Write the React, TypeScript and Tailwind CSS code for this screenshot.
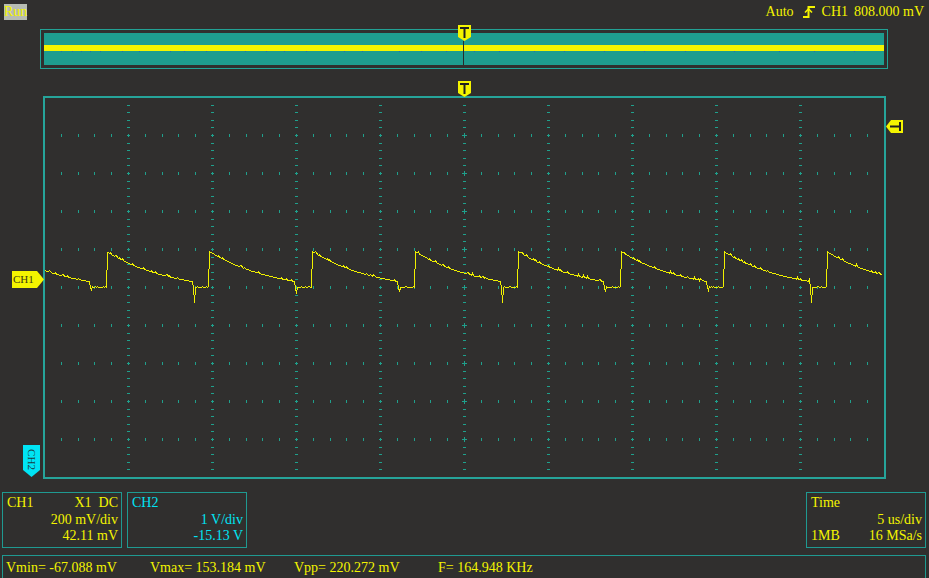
import React from 'react';

const YEL = '#f4f400';
const TEAL = '#22a295';

// deterministic jitter so the trace looks sampled
function rnd(i: number) {
  const s = Math.sin(i * 12.9898 + 78.233) * 43758.5453;
  return s - Math.floor(s);
}

function wavePoints() {
  const P = 102.9;
  const spikes: Record<number, number> = { 0: 289, 1: 302, 2: 293, 3: 291, 4: 302, 5: 291, 6: 290, 7: 302 };
  const pts: string[] = [];
  for (let x = 45; x <= 881; x++) {
    const t = x - 3.2;
    const n = Math.floor(t / P);
    const p = t - n * P;
    let y: number;
    if (p < 86) {
      y = 251 + 41 * (1 - Math.exp(-p / 65));
      if (p > 3 && rnd(x) > 0.86) y -= 1.5;
    } else if (p < 87) {
      y = 287;
    } else if (p < 88) {
      y = spikes[n] ?? 289;
    } else {
      y = 287 - (rnd(x) > 0.8 ? 1 : 0);
    }
    pts.push(`${x + 0.5},${Math.round(y) + 0.5}`);
  }
  return pts.join(' ');
}

const cols = [128, 212, 296, 380, 464, 548, 632, 716, 800];
const rows = [135, 173, 211, 249, 287, 325, 363, 401, 439];

function GridMarks() {
  const els: React.ReactNode[] = [];
  rows.forEach((r) => {
    for (let k = 1; k < 50; k++) {
      if (k % 5 === 0) continue;
      const x = Math.round(44 + 16.8 * k);
      els.push(<rect key={`r${r}-${k}`} x={x} y={r - 1} width={1} height={3} />);
    }
  });
  cols.forEach((c) => {
    for (let j = 1; j < 50; j++) {
      if (j % 5 === 0) continue;
      const y = Math.round(97 + 7.6 * j);
      els.push(<rect key={`c${c}-${j}`} x={c - 1} y={y} width={3} height={1} />);
    }
  });
  rows.forEach((r) =>
    cols.forEach((c) => {
      const s = c === 464 ? 2 : 1;
      els.push(
        <g key={`p${r}-${c}`}>
          <rect x={c - s} y={r} width={s * 2 + 1} height={1} />
          <rect x={c} y={r - s} width={1} height={s * 2 + 1} />
        </g>
      );
    })
  );
  return <g fill="#1fa08c">{els}</g>;
}

function TMarker({ className }: { className: string }) {
  return (
    <svg className={className} width="13" height="16" viewBox="0 0 13 16">
      <polygon points="0,0 13,0 13,12 6.5,16 0,12" fill={YEL} />
      <rect x="2" y="2" width="9" height="2" fill="#202020" />
      <rect x="5.5" y="2" width="2" height="11" fill="#202020" />
    </svg>
  );
}

function Box({ children }: { children: React.ReactNode }) {
  return (
    <div className="w-[120px] h-[56px] border border-[#1f9a91] pl-[4px] pr-[3px] pt-[2px] leading-[16.5px]">
      {children}
    </div>
  );
}

export default function App() {
  const blueTicks = [17, 28, 37, 46, 56, 78, 95, 126, 140, 162, 201, 222, 240, 262, 300, 318, 355, 377, 402, 430, 455, 490, 520, 560, 600, 641, 690, 735, 770, 810];
  return (
    <div className="relative w-[929px] h-[578px] overflow-hidden bg-[#302f2e] text-[14px] leading-[16px] text-[#f4f400] font-['Liberation_Serif','Times_New_Roman',serif]">
      {/* status line */}
      <div className="flex justify-between items-start pt-[4px] pl-[4px] pr-[5px] h-[29px]">
        <div className="bg-[#b7bcb2] h-[16px] w-[23px] leading-[16px]">Run</div>
        <div className="flex items-center">
          <span>Auto</span>
          <svg className="ml-[9px] mr-[7px]" width="12" height="12" viewBox="0 0 12 12">
            <path d="M0 11 H5.5 V1 H12" stroke={YEL} strokeWidth="2" fill="none" />
            <path d="M2 6.5 L5.5 3 L9 6.5" stroke={YEL} strokeWidth="1.6" fill="none" />
          </svg>
          <span>CH1</span>
          <span className="ml-[6px]">808.000 mV</span>
        </div>
      </div>

      {/* memory overview */}
      <div className="relative ml-[40px] w-[848px] h-[40px] border border-[#22a295] p-[3px]">
        <div className="relative h-full bg-[#1e9d8f]">
          <div className="absolute left-0 right-0 top-[12px] h-[6px] bg-[#f4f400]" />
          {blueTicks.map((x) => (
            <div key={x} className="absolute top-[18px] w-[1px] h-[1px] bg-[#2d63b8]" style={{ left: x }} />
          ))}
          <div className="absolute left-[419px] top-[8px] bottom-0 w-[1px] bg-[#2a2a2a]" />
        </div>
        <TMarker className="absolute left-[417px] top-[-5px]" />
      </div>

      {/* main graticule */}
      <div className="relative ml-[43px] mt-[27px] w-[843px] h-[383px] border-2 border-[#26a49a]">
        <svg className="absolute inset-0" width="839" height="379" viewBox="45 98 839 379" shapeRendering="crispEdges">
          <GridMarks />
          <polyline points={wavePoints()} fill="none" stroke="#f0f000" strokeWidth="1" />
        </svg>
        <TMarker className="absolute left-[413px] top-[-17px]" />
        {/* trigger level */}
        <svg className="absolute left-[841px] top-[22px]" width="17" height="13" viewBox="0 0 17 13">
          <polygon points="0,6.5 5,0 17,0 17,13 5,13" fill={YEL} />
          <rect x="4" y="5.5" width="10" height="2" fill="#202020" />
          <rect x="13" y="2" width="2" height="9" fill="#202020" />
        </svg>
        {/* CH1 offset */}
        <div className="absolute left-[-33px] top-[173px] w-[32px] h-[17px]">
          <svg className="absolute inset-0" width="32" height="17" viewBox="0 0 32 17">
            <polygon points="0,0 25,0 32,8.5 25,17 0,17" fill={YEL} />
          </svg>
          <span className="absolute left-[1px] top-[1px] text-[11px] leading-[15px] text-[#3a3a14]">CH1</span>
        </div>
        {/* CH2 offset */}
        <div className="absolute left-[-22px] top-[347px] w-[17px] h-[32px]">
          <svg className="absolute inset-0" width="17" height="32" viewBox="0 0 17 32">
            <polygon points="0,0 17,0 17,25 8.5,32 0,25" fill="#00e4f4" />
          </svg>
          <span className="absolute left-[-4px] top-[7px] w-[25px] h-[15px] text-[11px] leading-[15px] text-[#1c3a40] text-center rotate-90">
            CH2
          </span>
        </div>
      </div>

      {/* channel / time info */}
      <div className="flex justify-between mt-[13px] pl-[2px] pr-[3px] h-[56px]">
        <div className="flex gap-[5px]">
          <Box>
            <div className="flex justify-between">
              <span>CH1</span>
              <span className="whitespace-pre">X1  DC</span>
            </div>
            <div className="text-right">200 mV/div</div>
            <div className="text-right">42.11 mV</div>
          </Box>
          <Box>
            <div className="text-[#00e4f4]">
              <div>CH2</div>
              <div className="text-right">1 V/div</div>
              <div className="text-right">-15.13 V</div>
            </div>
          </Box>
        </div>
        <Box>
          <div>Time</div>
          <div className="text-right">5 us/div</div>
          <div className="flex justify-between">
            <span>1MB</span>
            <span>16 MSa/s</span>
          </div>
        </Box>
      </div>

      {/* measurements */}
      <div className="mt-[7px] ml-[2px] mr-[3px] h-[40px] border border-[#1f9a91] pt-[4px] pl-[3px] grid grid-cols-[144px_144px_144px_144px]">
        <span>Vmin= -67.088 mV</span>
        <span>Vmax= 153.184 mV</span>
        <span>Vpp= 220.272 mV</span>
        <span>F= 164.948 KHz</span>
      </div>
    </div>
  );
}
